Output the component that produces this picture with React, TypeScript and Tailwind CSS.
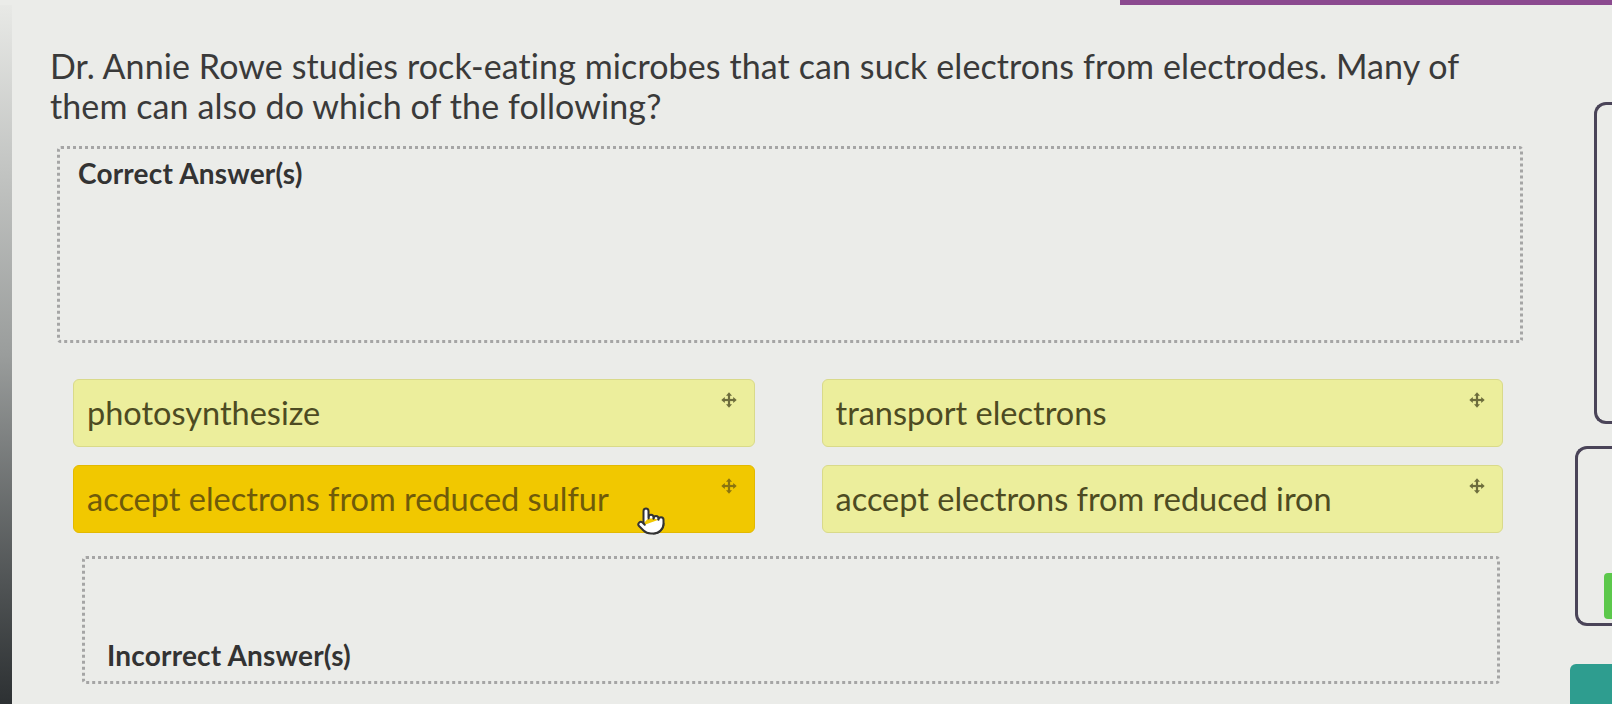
import { Pointer } from "lucide-react";

function MoveIcon({ className }: { className?: string }) {
  return (
    <svg viewBox="0 0 16 16" className={className} fill="currentColor">
      <rect x="6.9" y="3" width="2.2" height="10" />
      <rect x="3" y="6.9" width="10" height="2.2" />
      <path d="M8 0.3 L11 3.8 H5 Z" />
      <path d="M8 15.7 L11 12.2 H5 Z" />
      <path d="M0.3 8 L3.8 5 V11 Z" />
      <path d="M15.7 8 L12.2 5 V11 Z" />
    </svg>
  );
}

type Tile = { label: string; active?: boolean };

const tiles: Tile[] = [
  { label: "photosynthesize" },
  { label: "transport electrons" },
  { label: "accept electrons from reduced sulfur", active: true },
  { label: "accept electrons from reduced iron" },
];

function AnswerTile({ tile }: { tile: Tile }) {
  return (
    <div
      className={
        tile.active
          ? "relative flex h-[68px] items-center rounded-md border border-[#e3b900] bg-[#f1c800] pl-[13px] pr-4 text-[#6f5b0a]"
          : "relative flex h-[68px] items-center rounded-md border border-[#d9da8a] bg-[#ecee9c] pl-[13px] pr-4 text-[#4d4b22]"
      }
    >
      <span className="text-[32.5px] leading-none [font-variant-ligatures:none]">{tile.label}</span>
      <MoveIcon
        className={
          tile.active
            ? "absolute right-[17px] top-[12px] h-[16px] w-[16px] text-[#8a7410]"
            : "absolute right-[17px] top-[12px] h-[16px] w-[16px] text-[#6d6d3c]"
        }
      />
      {tile.active && (
        <Pointer
          className="absolute left-[562px] top-[40px] h-[30px] w-[30px] fill-white text-[#333]"
          strokeWidth={1.6}
        />
      )}
    </div>
  );
}

export default function App() {
  return (
    <div
      className="flex h-[704px] w-[1612px] flex-col overflow-hidden bg-[#ebece9] text-[#3b3b3b]"
      style={{ fontFamily: "Lato, 'Open Sans', sans-serif" }}
    >
      <div className="flex h-[5px] justify-end">
        <div className="w-[492px] bg-[#8b4a8f]" />
      </div>

      <div className="flex flex-1">
        <div className="w-[12px] bg-linear-to-b from-[#e8e9e6] via-[#9a9d9c] to-[#2d3133]" />

        <main className="flex flex-1 flex-col pl-[38px] pt-[41px]">
          <h1 className="whitespace-nowrap text-[34px] leading-[40px] tracking-[0.1px] text-[#3a3a3a] [font-variant-ligatures:none]">
            Dr. Annie Rowe studies rock-eating microbes that can suck electrons from electrodes. Many of
            <br />
            them can also do which of the following?
          </h1>

          <section className="ml-[7px] mt-[20px] h-[197px] w-[1466px] rounded-sm border-[3px] border-dotted border-[#a5a5a5] pl-[18px] pt-[8px]">
            <h2 className="text-[28px] font-bold leading-[32px] tracking-[0.2px] text-[#333]">
              Correct Answer(s)
            </h2>
          </section>

          <div className="ml-[23px] mt-[36px] grid w-[1430px] grid-cols-2 gap-x-[67px] gap-y-[18px]">
            {tiles.map((t) => (
              <AnswerTile key={t.label} tile={t} />
            ))}
          </div>

          <section className="ml-[32px] mt-[23px] flex h-[128px] w-[1418px] items-end rounded-sm border-[3px] border-dotted border-[#a5a5a5] pb-[10px] pl-[22px]">
            <h2 className="text-[28px] font-bold leading-[32px] tracking-[0.2px] text-[#333]">
              Incorrect Answer(s)
            </h2>
          </section>
        </main>

        <aside className="flex w-[50px] flex-col pt-[97px]">
          <div className="ml-[32px] h-[322px] rounded-l-xl border-[3px] border-r-0 border-[#4a4458]" />
          <div className="ml-[13px] mt-[22px] flex h-[180px] items-end justify-end rounded-l-xl border-[3px] border-r-0 border-[#4a4458] pb-[4px]">
            <div className="h-[46px] w-[8px] rounded-l-sm bg-[#5cc84b]" />
          </div>
          <div className="ml-[8px] mt-[38px] flex-1 rounded-tl-md bg-[#2e9d8f]" />
        </aside>
      </div>
    </div>
  );
}
